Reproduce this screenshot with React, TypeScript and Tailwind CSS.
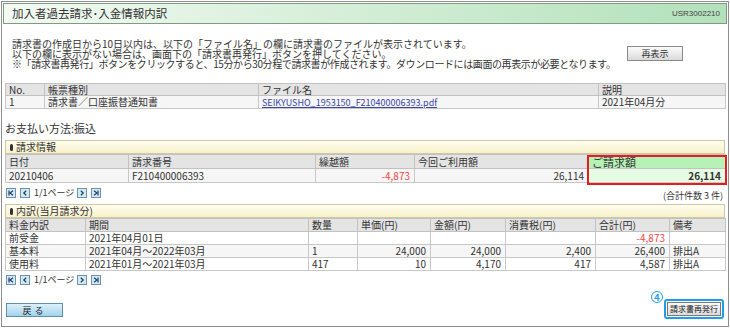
import React from "react";

function PagerBtn({ kind }: { kind: "first" | "prev" | "next" | "last" }) {
  return (
    <span className="inline-flex items-center justify-center w-[10px] h-[10px] border border-[#6f94a8] bg-[#d3e9f2]">
      <svg width="6" height="6" viewBox="0 0 6 6" fill="none" stroke="#1d3d6e" strokeWidth="1.2">
        {kind === "first" && (
          <>
            <path d="M1 0.5V5.5" />
            <path d="M5 0.8L2 3L5 5.2" />
          </>
        )}
        {kind === "prev" && <path d="M4.2 0.8L1.8 3L4.2 5.2" />}
        {kind === "next" && <path d="M1.8 0.8L4.2 3L1.8 5.2" />}
        {kind === "last" && (
          <>
            <path d="M5 0.5V5.5" />
            <path d="M1 0.8L4 3L1 5.2" />
          </>
        )}
      </svg>
    </span>
  );
}

function Pager({ right }: { right?: React.ReactNode }) {
  return (
    <div className="flex items-center h-[11px] pl-[1px]">
      <PagerBtn kind="first" />
      <span className="ml-[4px] flex">
        <PagerBtn kind="prev" />
      </span>
      <span className="ml-[4px] text-[9px] text-[#333]">1/1ページ</span>
      <span className="ml-[3px] flex">
        <PagerBtn kind="next" />
      </span>
      <span className="ml-[4px] flex">
        <PagerBtn kind="last" />
      </span>
      {right}
    </div>
  );
}

function SectionBar({ label }: { label: string }) {
  return (
    <div className="flex items-center h-[14px] border border-[#cfc8a6] bg-[linear-gradient(to_bottom,#fffdf0,#f7f1c8)] pl-[4px] text-[10px] text-[#333]">
      <span className="inline-block w-[3px] h-[7px] rounded-full bg-[#333] mr-[3px]" />
      {label}
    </div>
  );
}

const th = "border border-[#c2c2c2] bg-[#e4e4e4] px-[3px] py-0 text-left font-normal text-[10px] leading-[10px] text-[#333] whitespace-nowrap";
const td = "border border-[#c8c8c8] bg-[#f6f6f6] px-[3px] py-0 text-[10px] leading-[10px] text-[#333] whitespace-nowrap overflow-hidden";
const tdR = td + " text-right pr-[4px]";

export default function App() {
  return (
    <div className="w-[730px] h-[328px] bg-white font-['Noto_Sans_CJK_JP','Noto_Sans',sans-serif] text-[10px] leading-none text-[#333]">
      <div className="ml-px mt-px w-[728px] h-[326px] border border-[#8e8e8e] flex flex-col">
        {/* header */}
        <div className="mx-px mt-px h-[21px] border border-[#7f9c80] bg-[linear-gradient(to_right,#f3faf3,#b3e1ba)] flex items-center justify-between pl-[8px] pr-[6px]">
          <span className="text-[11.5px] text-[#333]">加入者過去請求･入金情報内訳</span>
          <span className="text-[8px] text-[#444] font-['Liberation_Sans',sans-serif]">USR3002210</span>
        </div>

        <div className="px-[3px] flex flex-col">
          {/* message */}
          <div className="flex mt-[15px] h-[30px]">
            <div className="ml-[7px] leading-[10px] text-[10px] text-[#333] whitespace-nowrap">
              <div>請求書の作成日から10日以内は、以下の「ファイル名」の欄に請求書のファイルが表示されています。</div>
              <div>以下の欄に表示がない場合は、画面下の「請求書再発行」ボタンを押してください。</div>
              <div className="tracking-[-0.4px]">※「請求書再発行」ボタンをクリックすると、15分から30分程で請求書が作成されます。ダウンロードには画面の再表示が必要となります。</div>
            </div>
            <div className="ml-auto mr-[42px] mt-[7px] w-[56px] h-[15px] shrink-0 border border-[#8a8a8a] bg-[linear-gradient(to_bottom,#fbfbfb,#dadada)] flex items-center justify-center text-[9px] text-[#333]">
              再表示
            </div>
          </div>

          {/* file table */}
          <table className="table-fixed border-collapse w-[720px] mt-[14px]">
            <colgroup>
              <col className="w-[39px]" />
              <col className="w-[214px]" />
              <col className="w-[340px]" />
              <col className="w-[127px]" />
            </colgroup>
            <tbody>
              <tr className="h-[12px]">
                <td className={th}>No.</td>
                <td className={th}>帳票種別</td>
                <td className={th}>ファイル名</td>
                <td className={th}>説明</td>
              </tr>
              <tr className="h-[13px]">
                <td className={td}>1</td>
                <td className={td}>請求書／口座振替通知書</td>
                <td className={td}>
                  <span className="text-[#3a46a8] underline text-[9px]">SEIKYUSHO_1953150_F210400006393.pdf</span>
                </td>
                <td className={td}>2021年04月分</td>
              </tr>
            </tbody>
          </table>

          <div className="mt-[13px] h-[12px] text-[11px] text-[#333] flex items-center">お支払い方法:振込</div>

          <div className="mt-[6px]">
            <SectionBar label="請求情報" />
          </div>
          <div className="relative">
            <table className="table-fixed border-collapse w-[720px]">
              <colgroup>
                <col className="w-[123px]" />
                <col className="w-[187px]" />
                <col className="w-[99px]" />
                <col className="w-[174px]" />
                <col className="w-[137px]" />
              </colgroup>
              <tbody>
                <tr className="h-[14px]">
                  <td className={th}>日付</td>
                  <td className={th}>請求番号</td>
                  <td className={th}>繰越額</td>
                  <td className={th}>今回ご利用額</td>
                  <td className={th + " !bg-[#b6f2b6] font-bold !text-[11px] text-[#222]"}>ご請求額</td>
                </tr>
                <tr className="h-[14px]">
                  <td className={td}>20210406</td>
                  <td className={td}>F210400006393</td>
                  <td className={tdR + " text-[#f04848]"}>-4,873</td>
                  <td className={tdR}>26,114</td>
                  <td className={tdR + " !bg-[#e6fbe4] font-bold text-[#222]"}>26,114</td>
                </tr>
              </tbody>
            </table>
            <div className="absolute left-[582px] top-[1px] w-[140px] h-[30px] border-2 border-[#e41e1e] pointer-events-none" />
          </div>

          <div className="mt-[4px]">
            <Pager right={<span className="ml-auto mr-[2px] mt-[5px] text-[9px] text-[#333]">(合計件数 3 件)</span>} />
          </div>

          <div className="mt-[6px]">
            <SectionBar label="内訳(当月請求分)" />
          </div>
          <table className="table-fixed border-collapse w-[720px]">
            <colgroup>
              <col className="w-[80px]" />
              <col className="w-[223px]" />
              <col className="w-[49px]" />
              <col className="w-[73px]" />
              <col className="w-[75px]" />
              <col className="w-[90px]" />
              <col className="w-[74px]" />
              <col className="w-[56px]" />
            </colgroup>
            <tbody>
              <tr className="h-[13px]">
                <td className={th}>料金内訳</td>
                <td className={th}>期間</td>
                <td className={th}>数量</td>
                <td className={th}>単価(円)</td>
                <td className={th}>金額(円)</td>
                <td className={th}>消費税(円)</td>
                <td className={th}>合計(円)</td>
                <td className={th}>備考</td>
              </tr>
              <tr className="h-[13px]">
                <td className={td + " !bg-white"}>前受金</td>
                <td className={td + " !bg-white"}>2021年04月01日</td>
                <td className={td + " !bg-white"}></td>
                <td className={tdR + " !bg-white"}></td>
                <td className={tdR + " !bg-white"}></td>
                <td className={tdR + " !bg-white"}></td>
                <td className={tdR + " !bg-white text-[#f04848]"}>-4,873</td>
                <td className={td + " !bg-white"}></td>
              </tr>
              <tr className="h-[13px]">
                <td className={td}>基本料</td>
                <td className={td}>2021年04月～2022年03月</td>
                <td className={td}>1</td>
                <td className={tdR}>24,000</td>
                <td className={tdR}>24,000</td>
                <td className={tdR}>2,400</td>
                <td className={tdR}>26,400</td>
                <td className={td}>排出A</td>
              </tr>
              <tr className="h-[13px]">
                <td className={td + " !bg-white"}>使用料</td>
                <td className={td + " !bg-white"}>2021年01月～2021年03月</td>
                <td className={td + " !bg-white"}>417</td>
                <td className={tdR + " !bg-white"}>10</td>
                <td className={tdR + " !bg-white"}>4,170</td>
                <td className={tdR + " !bg-white"}>417</td>
                <td className={tdR + " !bg-white"}>4,587</td>
                <td className={td + " !bg-white"}>排出A</td>
              </tr>
            </tbody>
          </table>

          <div className="mt-[3px]">
            <Pager />
          </div>

          <div className="flex items-end justify-between mt-[14px]">
            <div className="ml-[1px] mb-[1px] w-[57px] h-[14px] border border-[#5f92aa] bg-[linear-gradient(to_bottom,#dcf1fa,#a3d3e8)] flex items-center justify-center text-[9px] text-[#223] tracking-[3px]">
              戻る
            </div>
            <div className="relative mr-[1px] mb-[-1px] p-[1px] border-2 border-[#1e9fe4] rounded-[3px]">
              <span className="absolute left-[-15px] top-[-10px] w-[12px] h-[12px] rounded-full border-[1.5px] border-[#1e9fe4] bg-white text-[9px] font-bold text-[#1e9fe4] flex items-center justify-center">4</span>
              <div className="w-[54px] h-[14px] border border-[#7a7a7a] bg-[linear-gradient(to_bottom,#f8f8f8,#dcdcdc)] flex items-center justify-center text-[8px] text-[#222] whitespace-nowrap">
                請求書再発行
              </div>
            </div>
          </div>
        </div>
      </div>
    </div>
  );
}
